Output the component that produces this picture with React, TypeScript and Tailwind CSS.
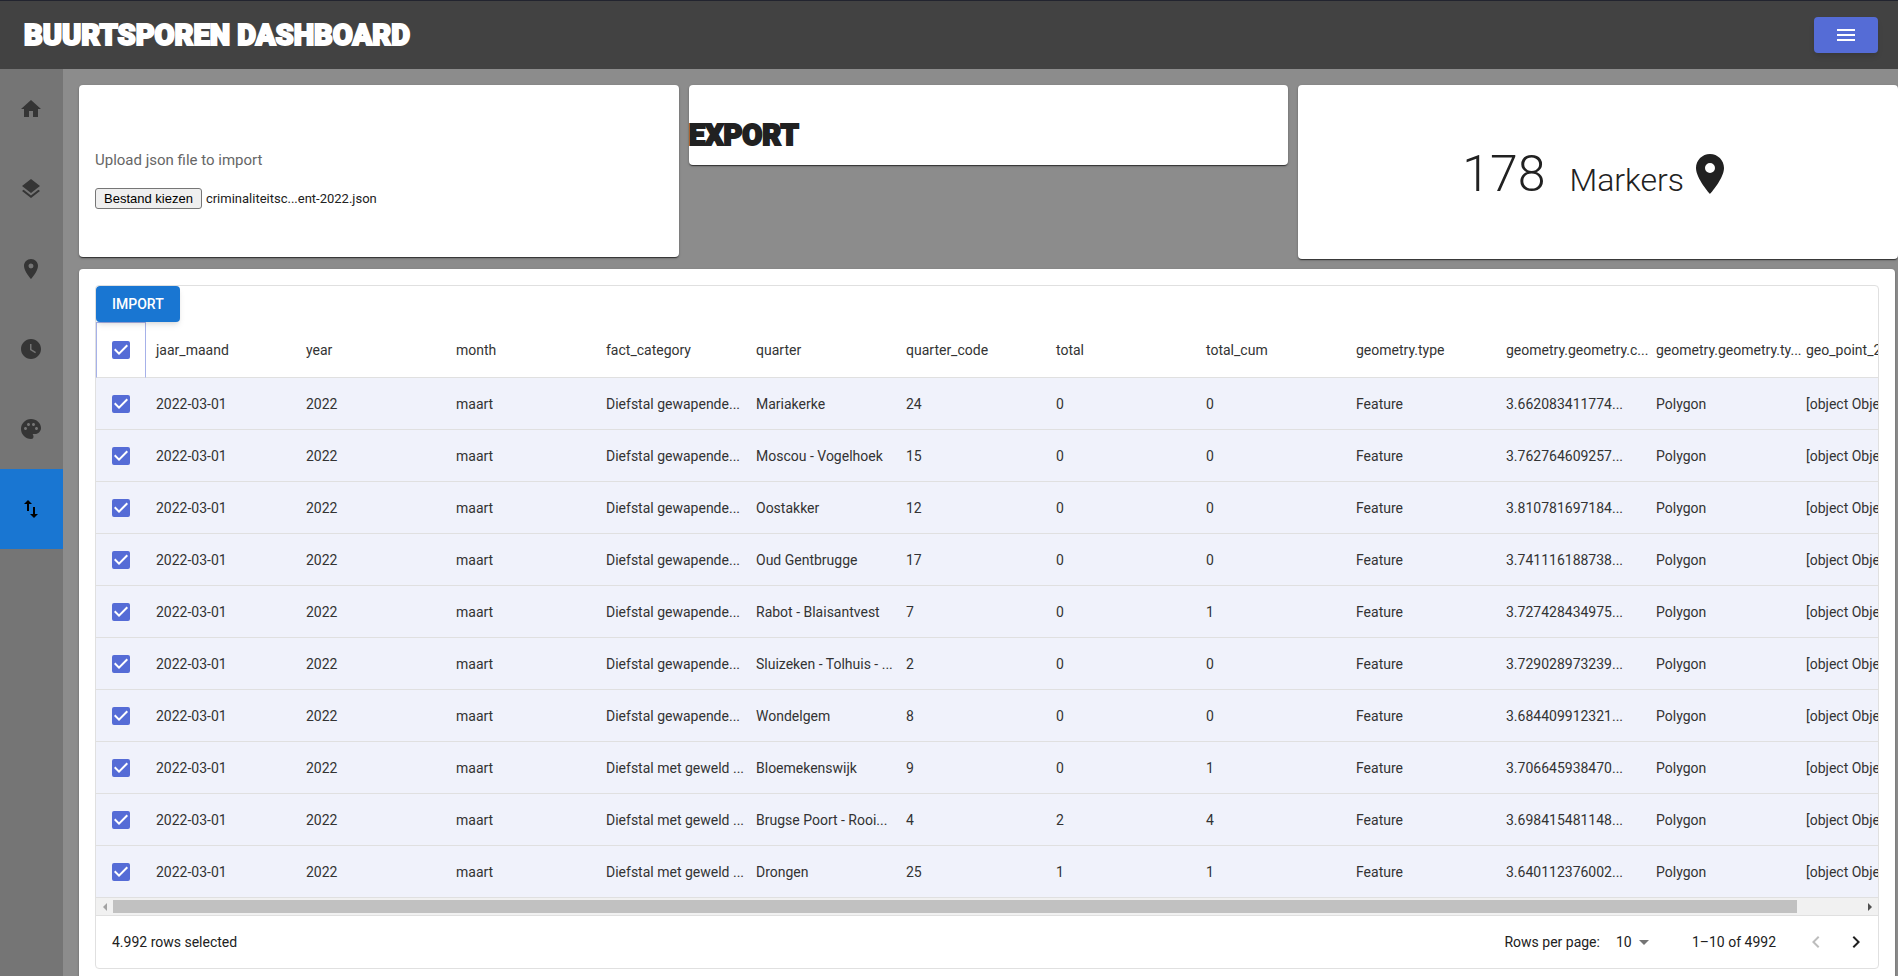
import { useRef, useState } from "react";
import type { ReactNode } from "react";
import {
  MdHome,
  MdLayers,
  MdLocationOn,
  MdWatchLater,
  MdPalette,
  MdImportExport,
  MdMenu,
  MdArrowDropDown,
  MdChevronLeft,
  MdChevronRight,
} from "react-icons/md";

const columns = [
  "jaar_maand",
  "year",
  "month",
  "fact_category",
  "quarter",
  "quarter_code",
  "total",
  "total_cum",
  "geometry.type",
  "geometry.geometry.c...",
  "geometry.geometry.ty...",
  "geo_point_2d",
];

const armed = "Diefstal gewapende...";
const violent = "Diefstal met geweld ...";

const records: string[][] = [
  [armed, "Mariakerke", "24", "0", "0", "3.662083411774..."],
  [armed, "Moscou - Vogelhoek", "15", "0", "0", "3.762764609257..."],
  [armed, "Oostakker", "12", "0", "0", "3.810781697184..."],
  [armed, "Oud Gentbrugge", "17", "0", "0", "3.741116188738..."],
  [armed, "Rabot - Blaisantvest", "7", "0", "1", "3.727428434975..."],
  [armed, "Sluizeken - Tolhuis - ...", "2", "0", "0", "3.729028973239..."],
  [armed, "Wondelgem", "8", "0", "0", "3.684409912321..."],
  [violent, "Bloemekenswijk", "9", "0", "1", "3.706645938470..."],
  [violent, "Brugse Poort - Rooi...", "4", "2", "4", "3.698415481148..."],
  [violent, "Drongen", "25", "1", "1", "3.640112376002..."],
];

const rows = records.map(([category, quarter, code, total, cum, coord]) => [
  "2022-03-01",
  "2022",
  "maart",
  category,
  quarter,
  code,
  total,
  cum,
  "Feature",
  coord,
  "Polygon",
  "[object Object]",
]);

const navItems = [
  { label: "Home", icon: MdHome },
  { label: "Layers", icon: MdLayers },
  { label: "Markers", icon: MdLocationOn },
  { label: "Time", icon: MdWatchLater },
  { label: "Theme", icon: MdPalette },
  { label: "Import and export", icon: MdImportExport, active: true },
];

const heading =
  "font-['Liberation_Sans_Narrow',Roboto,sans-serif] text-[29px] leading-10 font-black uppercase [-webkit-text-stroke:2px_currentColor]";

function Card({ className = "", children }: { className?: string; children: ReactNode }) {
  return (
    <section
      className={
        "rounded bg-white shadow-[0_2px_1px_-1px_rgba(0,0,0,0.4),0_1px_1px_0_rgba(0,0,0,0.28),0_1px_3px_0_rgba(0,0,0,0.2)] " +
        className
      }
    >
      {children}
    </section>
  );
}

function Checkbox({ label }: { label: string }) {
  return (
    <span className="relative mx-auto block size-[18px]">
      <input
        type="checkbox"
        defaultChecked
        aria-label={label}
        className="peer block size-[18px] appearance-none rounded-xs border-2 border-[#666] checked:border-[#556cd6] checked:bg-[#556cd6]"
      />
      <svg
        viewBox="3 3 18 18"
        className="pointer-events-none absolute inset-0 hidden size-[18px] fill-white peer-checked:block"
        aria-hidden="true"
      >
        <path d="M10 17l-5-5 1.41-1.41L10 14.17l7.59-7.59L19 8l-9 9z" />
      </svg>
    </span>
  );
}

export default function App() {
  const fileInput = useRef<HTMLInputElement>(null);
  const [fileName, setFileName] = useState("criminaliteitsc...ent-2022.json");

  return (
    <div className="flex h-screen flex-col overflow-hidden bg-[#8c8c8c] font-[Roboto,sans-serif] text-[#212121]">
      <header className="flex h-[69px] shrink-0 items-center justify-between border-t border-[#22242f] bg-[#424242] pt-1 pr-5 pb-1 pl-6">
        <h1 className={heading + " text-white"}>Buurtsporen dashboard</h1>
        <button
          type="button"
          aria-label="Menu"
          className="flex h-9 w-16 items-center justify-center rounded bg-[#556cd6] text-white shadow-md"
        >
          <MdMenu className="size-6" />
        </button>
      </header>

      <div className="flex min-h-0 flex-1">
        <nav className="w-[63px] shrink-0 bg-[#757575]">
          {navItems.map(({ label, icon: Icon, active }) => (
            <a
              key={label}
              href="#"
              aria-label={label}
              className={
                "flex h-20 items-center justify-center pr-px " +
                (active ? "bg-[#1976d2] text-black" : "text-[#353535]")
              }
            >
              <Icon className="size-6" />
            </a>
          ))}
        </nav>

        <main className="min-w-0 flex-1 pt-4 pl-4">
          <div className="grid h-[184px] grid-cols-3 items-start gap-[10px]">
            <Card className="flex h-[172px] flex-col gap-4 px-4 pt-[63px]">
              <p className="text-[15px] leading-6 text-[#666]">Upload json file to import</p>
              <div className="flex items-center gap-1 text-[13px]">
                <input
                  ref={fileInput}
                  type="file"
                  aria-label="Upload json file to import"
                  className="hidden"
                  onChange={(e) => setFileName(e.target.files?.[0]?.name ?? "")}
                />
                <button
                  type="button"
                  onClick={() => fileInput.current?.click()}
                  className="flex h-[21px] items-center rounded-[3px] border border-[#767676] bg-[#efefef] px-2 font-['Liberation_Sans',sans-serif] text-black"
                >
                  Bestand kiezen
                </button>
                <span className="font-[Roboto,sans-serif]">{fileName}</span>
              </div>
            </Card>
            <Card className="h-20 pt-[30px]">
              <h2 className={heading}>Export</h2>
            </Card>
            <Card className="flex h-[174px] items-center justify-center pt-1">
              <span className="text-[50px] leading-none font-light">178</span>
              <span className="ml-6 pt-3 text-[32px] leading-10 font-light">Markers</span>
              <MdLocationOn className="ml-0.5 size-12" />
            </Card>
          </div>

          <Card className="mr-[3px] p-4">
            <div className="overflow-hidden rounded border border-[#e0e0e0] text-sm">
              <button
                type="button"
                className="relative block h-9 rounded bg-[#1976d2] px-4 font-medium text-white uppercase shadow-md"
              >
                Import
              </button>

              <div className="overflow-hidden">
                <table className="w-[1850px] table-fixed border-separate border-spacing-0 text-left whitespace-nowrap">
                  <colgroup>
                    <col className="w-[50px]" />
                    {columns.map((name) => (
                      <col key={name} className="w-[150px]" />
                    ))}
                  </colgroup>
                  <thead>
                    <tr className="h-14">
                      <th className="border border-[#a6b1e9] border-b-[#e0e0e0] p-0">
                        <Checkbox label="Select all rows" />
                      </th>
                      {columns.map((name) => (
                        <th key={name} className="border-b border-[#e0e0e0] pl-[10px] font-normal text-[#333]">
                          {name}
                        </th>
                      ))}
                    </tr>
                  </thead>
                  <tbody>
                    {rows.map((cells, r) => (
                      <tr key={r} className="h-[52px] bg-[#f0f2fb]">
                        <td className="border-b border-[#e0e0e0] p-0">
                          <Checkbox label={"Select " + cells[4]} />
                        </td>
                        {cells.map((value, c) => (
                          <td key={c} className="border-b border-[#e0e0e0] pl-[10px] text-[#333]">
                            {value}
                          </td>
                        ))}
                      </tr>
                    ))}
                  </tbody>
                </table>
              </div>

              <div className="flex h-[17px] items-center bg-[#f1f1f1]" aria-hidden="true">
                <span className="flex w-[17px] justify-center">
                  <span className="border-y-4 border-r-4 border-y-transparent border-r-[#a3a3a3]" />
                </span>
                <span className="mr-16 h-[13px] flex-1 bg-[#c1c1c1]" />
                <span className="flex w-[17px] justify-center">
                  <span className="border-y-4 border-l-4 border-y-transparent border-l-[#505050]" />
                </span>
              </div>

              <footer className="flex h-[53px] items-center justify-between border-t border-[#e0e0e0] pr-[10px] pl-4">
                <span>4.992 rows selected</span>
                <div className="flex items-center">
                  <label htmlFor="page-size">Rows per page:</label>
                  <span className="relative ml-4 flex items-center">
                    <select
                      id="page-size"
                      defaultValue="10"
                      className="w-9 appearance-none bg-transparent outline-none"
                    >
                      <option value="10">10</option>
                      <option value="25">25</option>
                      <option value="100">100</option>
                    </select>
                    <MdArrowDropDown className="pointer-events-none absolute -right-1 size-6 text-[#757575]" />
                  </span>
                  <span className="ml-10">1–10 of 4992</span>
                  <button type="button" aria-label="Previous page" disabled className="ml-7 text-[#bdbdbd]">
                    <MdChevronLeft className="size-6" />
                  </button>
                  <button type="button" aria-label="Next page" className="ml-4">
                    <MdChevronRight className="size-6" />
                  </button>
                </div>
              </footer>
            </div>
          </Card>
        </main>
      </div>
    </div>
  );
}
